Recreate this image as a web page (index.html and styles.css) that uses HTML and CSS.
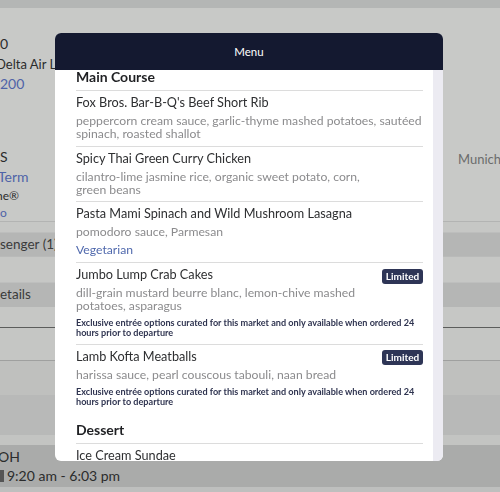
FILE: index.html
```html
<!DOCTYPE html>
<html>
<head>
    <title>Trip Details - Menu</title>
    <link rel="stylesheet" href="styles.css">
</head>
<body>
    <div class="page">
        <div class="topbar"></div>

        <div class="summary">
            <div class="summary-left">
                <div class="line line-num">0</div>
                <div class="line line-airline">Delta Air Lines</div>
                <div class="line line-link">200</div>
                <div class="line line-code">S</div>
                <div class="line line-link line-term">Term</div>
                <div class="line line-small">ne®</div>
                <div class="line line-link line-small2">o</div>
            </div>
            <div class="summary-right">
                <div class="city">Munich,</div>
            </div>
        </div>

        <div class="row row-gap"></div>
        <div class="row row-band">senger (1)</div>
        <div class="row row-light row-lines"></div>
        <div class="row row-band">etails</div>
        <div class="row row-light row-line-mid"></div>
        <div class="row row-tall"></div>
        <div class="row row-mid"></div>
        <div class="row row-dim"></div>
        <div class="row row-strip"></div>
        <div class="row row-times">
            <div class="stop">OH</div>
            <div class="time"><span class="sq"></span>9:20 am - 6:03 pm</div>
        </div>
    </div>

    <div class="modal">
        <div class="modal-header">Menu</div>
        <div class="modal-body">
            <div class="menu-scroll">
                <h3 class="course">Main Course</h3>

                <div class="item">
                    <div class="item-main">
                        <div class="item-text">
                            <div class="item-title">Fox Bros. Bar-B-Q's Beef Short Rib</div>
                            <p class="item-desc">peppercorn cream sauce, garlic-thyme mashed potatoes, sautéed spinach, roasted shallot</p>
                        </div>
                    </div>
                </div>

                <div class="item">
                    <div class="item-main">
                        <div class="item-text">
                            <div class="item-title">Spicy Thai Green Curry Chicken</div>
                            <p class="item-desc">cilantro-lime jasmine rice, organic sweet potato, corn, green&nbsp;beans</p>
                        </div>
                    </div>
                </div>

                <div class="item">
                    <div class="item-main">
                        <div class="item-text">
                            <div class="item-title">Pasta Mami Spinach and Wild Mushroom Lasagna</div>
                            <p class="item-desc">pomodoro sauce, Parmesan</p>
                            <p class="item-tag">Vegetarian</p>
                        </div>
                    </div>
                </div>

                <div class="item">
                    <div class="item-main">
                        <div class="item-text">
                            <div class="item-title">Jumbo Lump Crab Cakes</div>
                            <p class="item-desc">dill-grain mustard beurre blanc, lemon-chive mashed potatoes, asparagus</p>
                        </div>
                        <span class="badge">Limited</span>
                    </div>
                    <p class="item-note">Exclusive entrée options curated for this market and only available when ordered 24 hours prior to departure</p>
                </div>

                <div class="item item-last">
                    <div class="item-main">
                        <div class="item-text">
                            <div class="item-title">Lamb Kofta Meatballs</div>
                            <p class="item-desc">harissa sauce, pearl couscous tabouli, naan bread</p>
                        </div>
                        <span class="badge">Limited</span>
                    </div>
                    <p class="item-note">Exclusive entrée options curated for this market and only available when ordered 24 hours prior to departure</p>
                </div>

                <h3 class="course course-next">Dessert</h3>

                <div class="item">
                    <div class="item-main">
                        <div class="item-text">
                            <div class="item-title">Ice Cream Sundae</div>
                            <p class="item-desc">vanilla ice cream, hot fudge, whipped cream</p>
                        </div>
                    </div>
                </div>
            </div>
            <div class="scroll-track"></div>
        </div>
    </div>
</body>
</html>
```

FILE: styles.css
```css
body { margin: 0; font-family: Lato, "Open Sans", sans-serif; background: #c6c7c5; overflow: hidden; }
.page { height: 492px; color: #2b2c2c; }

/* dimmed page behind the dialog */
.topbar { height: 8px; background: #b4b6b5; }
.summary { height: 213px; display: flex; justify-content: space-between; background: #c8c9c7; border-bottom: 1px solid #b3b4b3; }
.summary-left { width: 55px; overflow: hidden; white-space: nowrap; padding-top: 26px; font-size: 14px; }
.line { line-height: 20px; }
.line-airline { margin-left: -4px; font-size: 13px; }
.line-link { color: #4f63a8; }
.line-code { margin-top: 53px; }
.line-term { line-height: 19px; margin-left: -2px; }
.line-small { font-size: 12px; line-height: 19px; margin-left: -4px; }
.line-small2 { font-size: 12px; line-height: 15px; }
.summary-right { width: 42px; padding-top: 142px; overflow: hidden; white-space: nowrap; }
.city { font-size: 13px; color: #6b6c6c; line-height: 18px; }

.row { background: #c6c7c5; font-size: 14px; white-space: nowrap; overflow: hidden; }
.row-gap { height: 10px; border-bottom: 1px solid #bdbebd; }
.row-band { height: 23px; line-height: 23px; background: #b5b6b5; color: #3a3b3b; font-size: 13.5px; }
.row-lines { height: 26px; border-bottom: 1px solid #bebfbe; box-shadow: inset 0 9px 0 -8px #b9bab9, inset 0 16px 0 -15px #b9bab9; }
.row-line-mid { height: 21px; box-shadow: inset 0 11px 0 -10px #b5b6b5; border-bottom: 1px solid #5c5d5c; }
.row-tall { height: 32px; background: #c5c6c4; border-bottom: 1px solid #9fa09f; }
.row-mid { height: 34px; background: #bfc0be; }
.row-dim { height: 40px; background: #b8b9b8; }
.row-strip { height: 10px; background: #c3c4c2; }
.row-times { height: 47px; box-sizing: border-box; padding-top: 3px; background: #aaabaa; border-bottom: 5px solid #bebfbe; }
.stop { margin-left: -2px; line-height: 18px; }
.time { line-height: 20px; }
.sq { display: inline-block; width: 4px; height: 12px; background: #555; margin-right: 3px; vertical-align: -1px; }

/* dialog */
.modal { position: fixed; left: 55px; top: 33px; width: 388px; height: 428px; border-radius: 6px; overflow: hidden; background: #fff; display: flex; flex-direction: column; }
.modal-header { height: 37px; flex-shrink: 0; background: #141930; color: #fff; font-size: 11.5px; line-height: 37px; text-align: center; }
.modal-body { flex: 1; display: flex; overflow: hidden; }
.menu-scroll { flex: 1; padding: 0 10px 0 21px; overflow: hidden; }
.scroll-track { width: 10px; background: #ecebf2; }

.course { margin: 0; font-size: 14px; line-height: 14px; font-weight: 700; color: #1f2023; padding-bottom: 6px; border-bottom: 1px solid #dcdcdc; }
.course-next { margin-top: 10.5px; padding-bottom: 6px; }

.item { padding: 3px 0 5.5px; border-bottom: 1px solid #dcdcdc; }
.item-last { border-bottom: none; }
.item-main { display: flex; align-items: flex-start; gap: 12px; }
.item-text { flex: 1; }
.item-title { font-size: 12.7px; line-height: 16px; color: #2e2f31; }
.item-desc { margin: 4px 0 0; font-size: 12.2px; line-height: 13px; color: #8b8b8d; }
.item-tag { margin: 4.5px 0 0; font-size: 12.2px; line-height: 14px; color: #5069ad; }
.item-note { margin: 6px 0 0; font-size: 9.1px; line-height: 10px; font-weight: 700; color: #2f3450; }
.badge { flex-shrink: 0; width: 41px; height: 15px; margin-top: 2.5px; line-height: 15px; text-align: center; border-radius: 3px; background: #2e3556; color: #fff; font-size: 10px; font-weight: 700; }
```
